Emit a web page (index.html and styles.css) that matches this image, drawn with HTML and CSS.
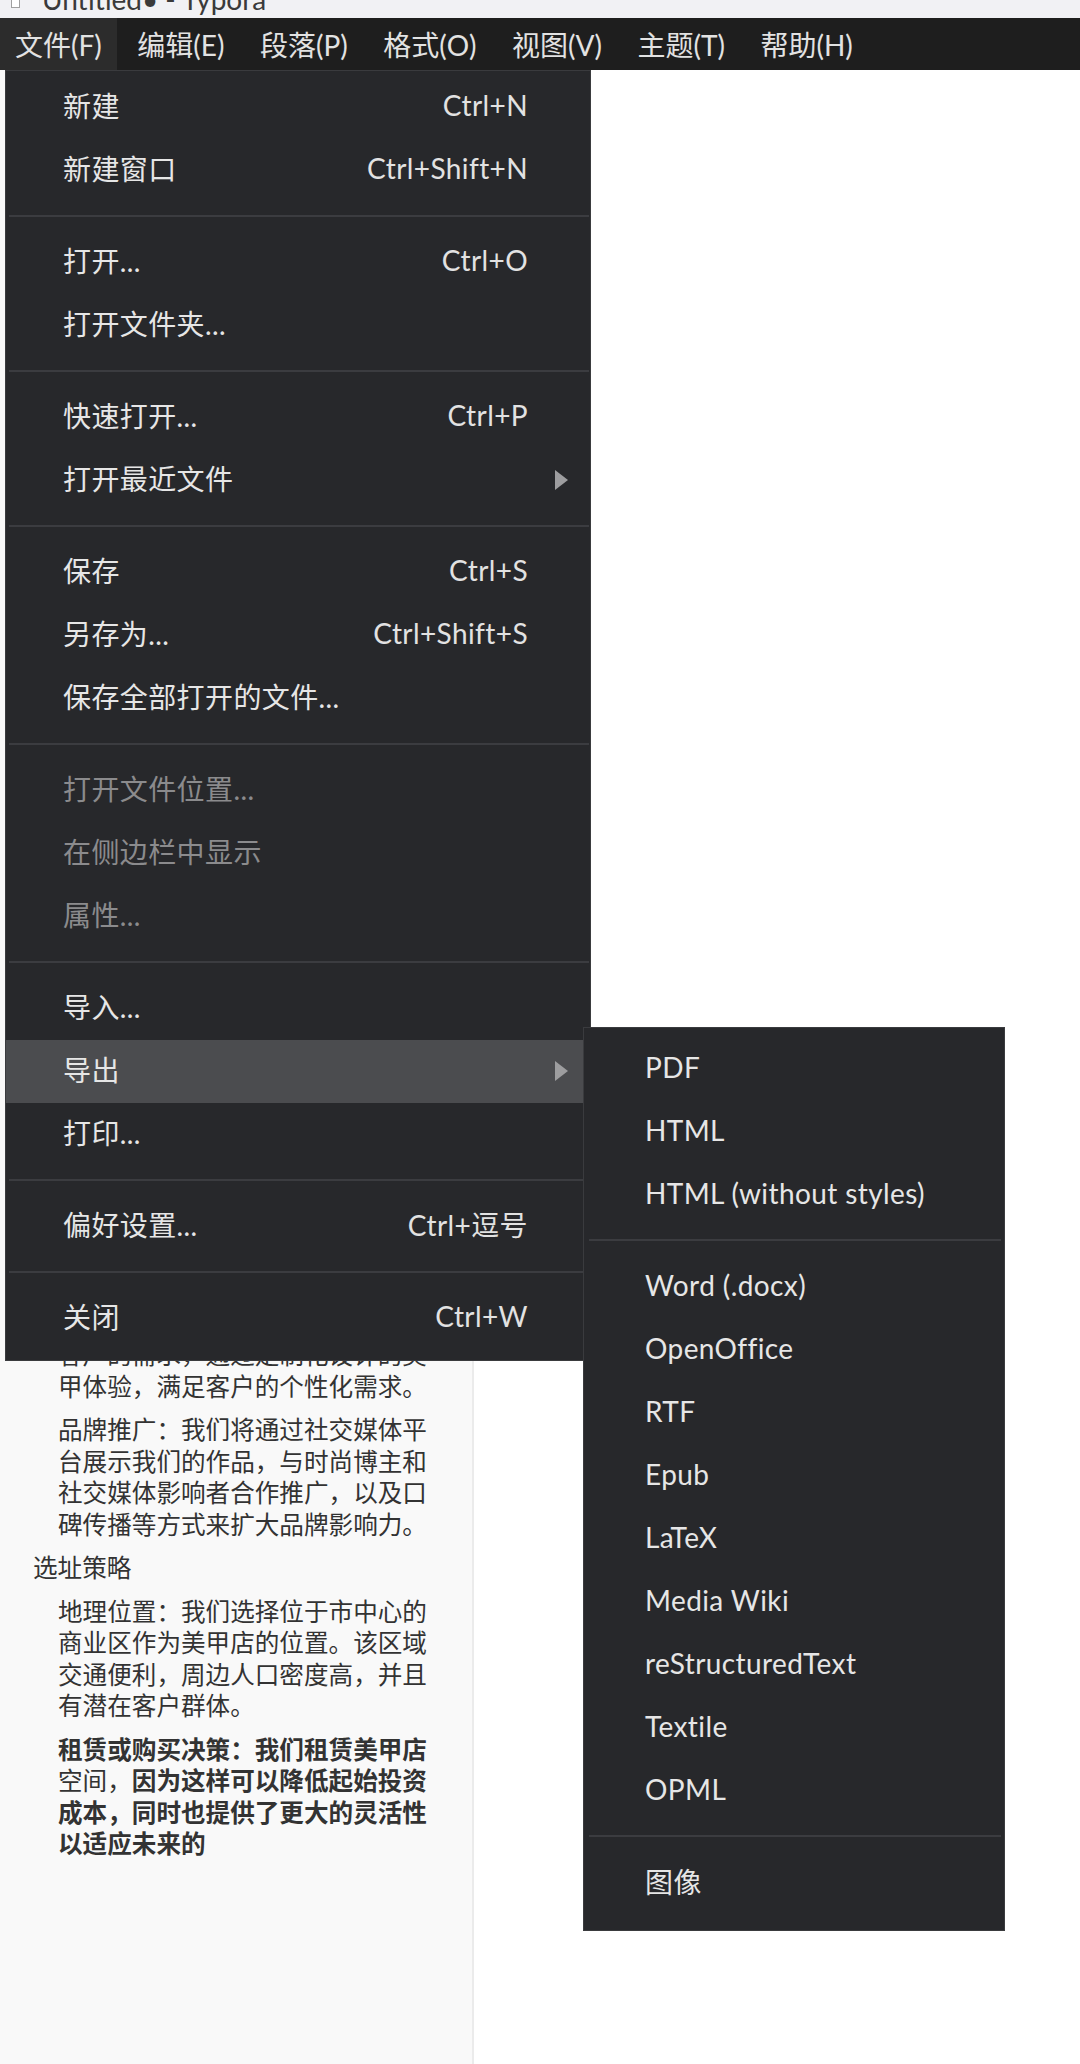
FILE: index.html
```html
<!DOCTYPE html>
<html lang="zh-CN">
<head>
<meta charset="utf-8">
<title>Untitled• - Typora</title>
<link rel="stylesheet" href="styles.css">
</head>
<body>
<div class="window">
  <header class="titlebar">
    <span class="app-icon"></span>
    <span class="title-text">Untitled• - Typora</span>
  </header>

  <nav class="menubar">
    <div class="menubar-item is-open">文件(F)
      <div class="dropdown">
        <div class="menu-item"><span class="label">新建</span><span class="shortcut">Ctrl+N</span></div>
        <div class="menu-item"><span class="label">新建窗口</span><span class="shortcut">Ctrl+Shift+N</span></div>
        <div class="menu-sep"></div>
        <div class="menu-item"><span class="label">打开...</span><span class="shortcut">Ctrl+O</span></div>
        <div class="menu-item"><span class="label">打开文件夹...</span></div>
        <div class="menu-sep"></div>
        <div class="menu-item"><span class="label">快速打开...</span><span class="shortcut">Ctrl+P</span></div>
        <div class="menu-item"><span class="label">打开最近文件</span><span class="shortcut"></span><svg class="arrow" width="13" height="20" viewBox="0 0 13 20"><polygon points="0,0 13,10 0,20"/></svg></div>
        <div class="menu-sep"></div>
        <div class="menu-item"><span class="label">保存</span><span class="shortcut">Ctrl+S</span></div>
        <div class="menu-item"><span class="label">另存为...</span><span class="shortcut">Ctrl+Shift+S</span></div>
        <div class="menu-item"><span class="label">保存全部打开的文件...</span></div>
        <div class="menu-sep"></div>
        <div class="menu-item disabled"><span class="label">打开文件位置...</span></div>
        <div class="menu-item disabled"><span class="label">在侧边栏中显示</span></div>
        <div class="menu-item disabled"><span class="label">属性...</span></div>
        <div class="menu-sep"></div>
        <div class="menu-item"><span class="label">导入...</span></div>
        <div class="menu-item has-submenu is-hover"><span class="label">导出</span><span class="shortcut"></span><svg class="arrow" width="13" height="20" viewBox="0 0 13 20"><polygon points="0,0 13,10 0,20"/></svg>
          <div class="submenu">
            <div class="menu-item">PDF</div>
            <div class="menu-item">HTML</div>
            <div class="menu-item">HTML (without styles)</div>
            <div class="menu-sep"></div>
            <div class="menu-item">Word (.docx)</div>
            <div class="menu-item">OpenOffice</div>
            <div class="menu-item">RTF</div>
            <div class="menu-item">Epub</div>
            <div class="menu-item">LaTeX</div>
            <div class="menu-item">Media Wiki</div>
            <div class="menu-item">reStructuredText</div>
            <div class="menu-item">Textile</div>
            <div class="menu-item">OPML</div>
            <div class="menu-sep"></div>
            <div class="menu-item">图像</div>
          </div>
        </div>
        <div class="menu-item"><span class="label">打印...</span></div>
        <div class="menu-sep"></div>
        <div class="menu-item"><span class="label">偏好设置...</span><span class="shortcut">Ctrl+逗号</span></div>
        <div class="menu-sep"></div>
        <div class="menu-item"><span class="label">关闭</span><span class="shortcut">Ctrl+W</span></div>
      </div>
    </div>
    <div class="menubar-item">编辑(E)</div>
    <div class="menubar-item">段落(P)</div>
    <div class="menubar-item">格式(O)</div>
    <div class="menubar-item">视图(V)</div>
    <div class="menubar-item">主题(T)</div>
    <div class="menubar-item">帮助(H)</div>
  </nav>

  <main class="workspace">
    <section class="doc">
      <p>客户的需求，通过定制化设计的美甲体验，满足客户的个性化需求。</p>
      <p>品牌推广：我们将通过社交媒体平台展示我们的作品，与时尚博主和社交媒体影响者合作推广，以及口碑传播等方式来扩大品牌影响力。</p>
      <h3>选址策略</h3>
      <p>地理位置：我们选择位于市中心的商业区作为美甲店的位置。该区域交通便利，周边人口密度高，并且有潜在客户群体。</p>
      <p><strong>租赁或购买决策：我们租赁美甲店</strong>空间，<strong>因为这样可以降低起始投资成本，同时也提供了更大的灵活性以适应未来的</strong></p>
    </section>
    <section class="editor"></section>
  </main>
</div>
</body>
</html>
```

FILE: styles.css
```css
* {
  box-sizing: border-box;
  margin: 0;
  padding: 0;
}

html, body {
  width: 1080px;
  height: 2064px;
}

body {
  background: #ffffff;
  font-family: Lato, "Noto Sans CJK SC", sans-serif;
  overflow: hidden;
}

.window {
  width: 1080px;
  height: 2064px;
  display: flex;
  flex-direction: column;
}

/* ---------- title bar ---------- */
.titlebar {
  height: 18px;
  flex: none;
  background: #f1f1f4;
  display: flex;
  align-items: flex-end;
  gap: 22px;
  padding-left: 11px;
  overflow: hidden;
}

.app-icon {
  width: 9px;
  height: 12px;
  border: 1px solid #a0a0a0;
  background: #ffffff;
  margin-bottom: 10px;
}

.title-text {
  font-size: 28px;
  line-height: 28px;
  color: #3a3a3a;
  padding-bottom: 5px;
  white-space: nowrap;
}

/* ---------- menu bar ---------- */
.menubar {
  height: 52px;
  flex: none;
  background: #1e1e1e;
  display: flex;
  align-items: stretch;
  gap: 5.5px;
  position: relative;
  z-index: 10;
}

.menubar-item {
  position: relative;
  display: flex;
  align-items: center;
  padding: 0 15px;
  font-size: 28px;
  color: #e2e2e2;
  white-space: nowrap;
}

.menubar-item.is-open {
  background: #2c2c2c;
}

/* ---------- dropdown ---------- */
.dropdown {
  position: absolute;
  left: 5px;
  top: 52px;
  width: 586px;
  background: #27282b;
  border: 1px solid #3a3b3e;
  padding: 5px 0 10px;
  color: #e6e6e6;
  font-size: 28px;
  letter-spacing: 0.4px;
  z-index: 20;
}

.menu-item {
  height: 63px;
  display: grid;
  grid-template-columns: 1fr auto 62px;
  align-items: center;
  padding-left: 57px;
  padding-bottom: 5px;
  white-space: nowrap;
}

.menu-item .shortcut {
  color: #e2e2e2;
}

.menu-item .arrow {
  margin-left: 27px;
  margin-top: 4px;
  fill: #9d9d9f;
}

.menu-item.disabled {
  color: #8b8b8d;
}

.menu-item.is-hover {
  background: #4b4c4f;
}

.has-submenu {
  position: relative;
}

.menu-sep {
  height: 2px;
  margin: 13px 1px 14px 3px;
  background: #3b3c40;
}

/* ---------- submenu ---------- */
.submenu {
  position: absolute;
  left: 577px;
  top: -13px;
  width: 422px;
  background: #27282b;
  border: 1px solid #3a3b3e;
  padding: 9px 0 16px;
  color: #e6e6e6;
  z-index: 30;
}

.submenu .menu-item {
  display: flex;
  padding-left: 61px;
  padding-bottom: 3px;
}

.submenu .menu-sep {
  margin: 13px 3px 14px 5px;
}

/* ---------- workspace ---------- */
.workspace {
  flex: 1;
  display: flex;
  min-height: 0;
}

.doc {
  width: 474px;
  flex: none;
  background: #f9f9f9;
  border-right: 2px solid #ebebeb;
  padding: 1268px 0 0 33px;
  font-family: "Noto Sans CJK SC", sans-serif;
  font-size: 24.6px;
  line-height: 31.5px;
  color: #333333;
}

.doc p {
  width: 374px;
  margin: 0 0 12px 25px;
}

.doc h3 {
  font-size: 24.6px;
  font-weight: normal;
  margin-bottom: 12px;
}

.doc strong {
  font-weight: 700;
}

.editor {
  flex: 1;
  background: #ffffff;
}
```
